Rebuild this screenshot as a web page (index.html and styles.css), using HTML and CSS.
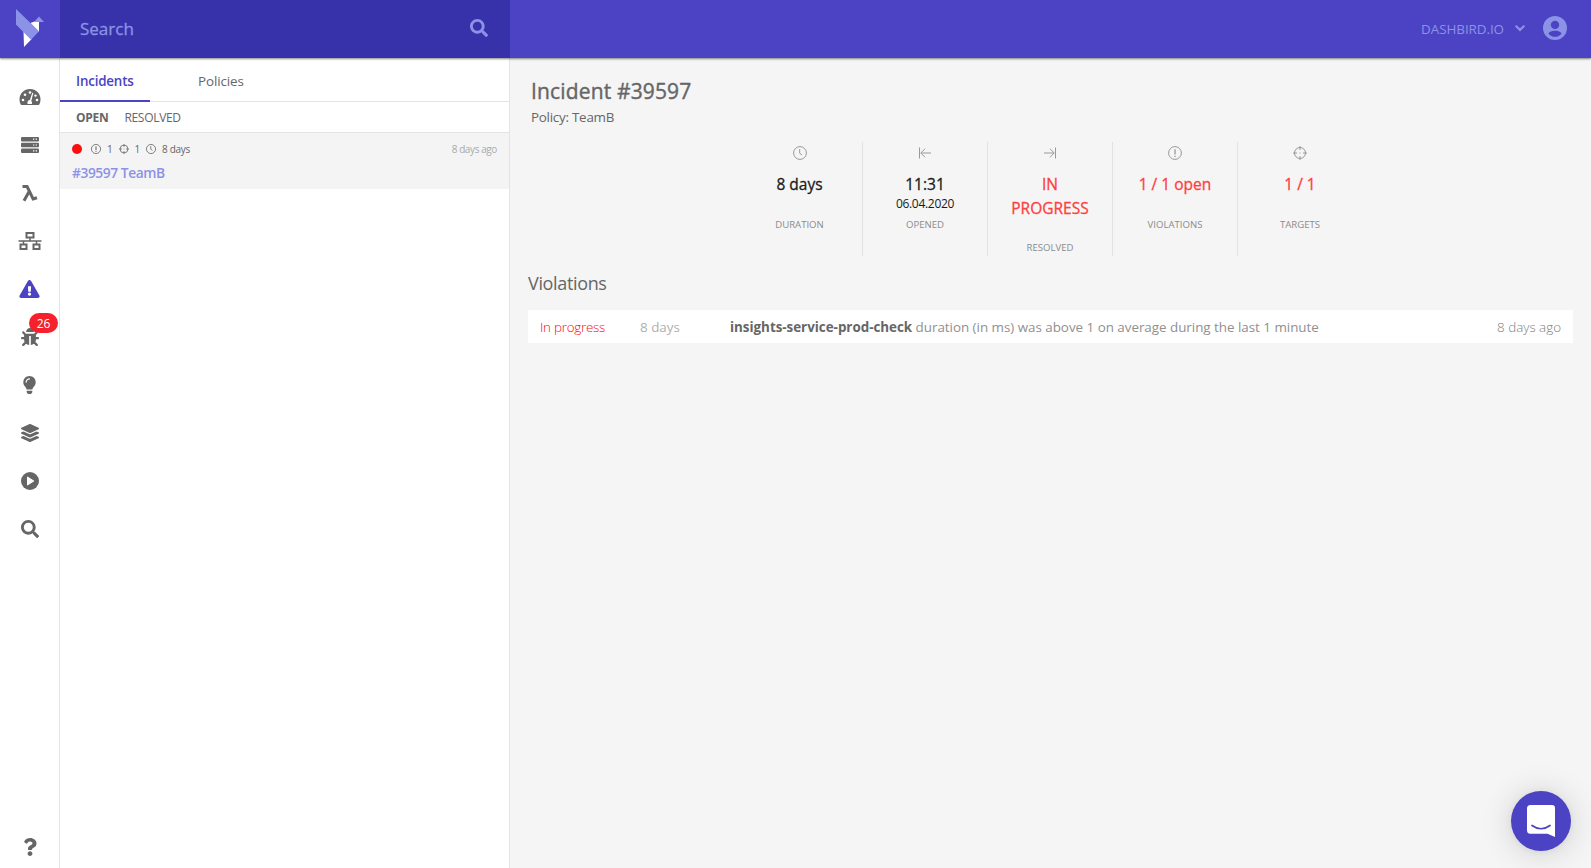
FILE: index.html
```
<!DOCTYPE html>
<html lang="en">
<head>
<meta charset="utf-8">
<title>Incident #39597</title>
<link rel="stylesheet" href="styles.css">
</head>
<body>
<svg class="defs" aria-hidden="true">
  <symbol id="search" viewBox="0 0 512 512"><path d="M505 442.7L405.3 343c-4.500-4.500-10.600-7-17-7H372c27.600-35.300 44-79.700 44-128C416 93.100 322.900 0 208 0S0 93.100 0 208s93.100 208 208 208c48.300 0 92.700-16.400 128-44v16.300c0 6.400 2.500 12.500 7 17l99.700 99.700c9.400 9.400 24.600 9.400 33.900 0l28.300-28.300c9.400-9.400 9.400-24.600.1-34zM208 336c-70.700 0-128-57.200-128-128 0-70.700 57.200-128 128-128 70.700 0 128 57.200 128 128 0 70.700-57.200 128-128 128z"/></symbol>
  <symbol id="clock" viewBox="0 0 14 14"><g fill="none" stroke="currentColor"><circle cx="7" cy="7" r="6.4"/><path d="M6.700 3v4.300L9 9"/></g></symbol>
  <symbol id="alert" viewBox="0 0 14 14"><g fill="none" stroke="currentColor"><circle cx="7" cy="7" r="6.400"/><path d="M7 3.300v5.200M7 9.700v1.300" stroke-width="1.300"/></g></symbol>
  <symbol id="target" viewBox="0 0 14 14"><g fill="none" stroke="currentColor"><circle cx="7" cy="7" r="5.500"/><path d="M7 0v4M7 10v4M0 7h4M10 7h4M6.500 7h1"/></g></symbol>
</svg>
<header class="topbar">
  <a class="logo"><svg width="59" height="58" viewBox="0 0 59 58"><path fill="#fff" d="M30.500 23L34.500 21.500H39V32zM23.500 31L31.500 39.300 24 47z"/><path fill="#8c92e6" d="M16 9L39 31.200 31 39.700 16 24.500zM34 22L39 16.500 44 22z"/></svg></a>
  <div class="searchbox"><span class="search-text">Search</span><svg class="search-icon"><use href="#search"/></svg></div>
  <div class="account"><span class="org">DASHBIRD.IO</span>
    <svg class="chev" viewBox="0 0 10 7"><path d="M1.300 1.300L5 5l3.700-3.700" fill="none" stroke="currentColor" stroke-width="2.200" stroke-linecap="round"/></svg>
    <svg class="avatar" viewBox="0 0 24 24"><path fill="currentColor" fill-rule="evenodd" d="M12 0a12 12 0 1 0 0 24 12 12 0 0 0 0-24zm0 4.700a4.200 4.200 0 1 1 0 8.400 4.200 4.200 0 0 1 0-8.400zM5.500 17.700c.6-2.200 4.200-3 6.500-3s5.900.8 6.500 3c-1.400 2-4 3.100-6.500 3.100s-5.100-1.100-6.500-3.100z"/></svg>
  </div>
</header>
<div class="shell">
  <nav class="rail">
    <a class="nav"><svg width="22" height="18" viewBox="0 0 22 18"><path fill-rule="evenodd" d="M11 1C5 1 .5 5.600.5 11.500c0 1.900.4 3.500 1.200 5 .2.300.5.500.9.500h16.800c.4 0 .7-.2.9-.5.800-1.500 1.200-3.100 1.200-5C21.500 5.600 17 1 11 1z"/><g fill="#fff"><circle cx="4" cy="12" r="1.300"/><circle cx="6" cy="6.800" r="1.300"/><circle cx="11" cy="4.500" r="1.300"/><circle cx="16.500" cy="7.600" r="1.200"/><circle cx="18" cy="12" r="1.300"/><path d="M13.300 4.800l1 .3-2 7.900a2.500 2.500 0 0 1 .5 3H8.700a2.600 2.600 0 0 1 2.200-3.900z"/></g></svg></a>
    <a class="nav"><svg width="18" height="18" viewBox="0 0 18 18"><rect y="1" width="18" height="4.500" rx="1"/><rect y="6.800" width="18" height="4.500" rx="1"/><rect y="12.500" width="18" height="4.500" rx="1"/><path stroke="#fff" stroke-width="1.200" d="M12 3.200h1.300M14.700 3.200H16M12 9h1.300M14.700 9H16M12 14.800h1.300M14.700 14.800H16"/></svg></a>
    <a class="nav"><svg width="18" height="18" viewBox="0 0 18 18"><path fill="none" stroke="currentColor" stroke-width="3" d="M1.500 2.500h4.600l6 12.400 3.900-1.200M8.300 7.300L3 16.800"/></svg></a>
    <a class="nav"><svg width="24" height="20" viewBox="0 0 24 20"><g fill="none" stroke="currentColor" stroke-width="2"><rect x="8.500" y="2" width="7" height="4.500"/><rect x="2.500" y="13.500" width="6" height="4.500"/><rect x="15.500" y="13.500" width="6" height="4.500"/><path stroke-width="1.500" d="M.5 10h23M12 7v3M5.500 10v3M18.500 10v3"/></g></svg></a>
    <a class="nav active"><svg width="21" height="18" viewBox="0 0 576 512"><path d="M569.517 440.013C587.975 472.007 564.806 512 527.940 512H48.054c-36.937 0-59.999-40.055-41.577-71.987L246.423 23.985c18.467-32.009 64.720-31.951 83.154 0l239.940 416.028zM288 354c-25.405 0-46 20.595-46 46s20.595 46 46 46 46-20.595 46-46-20.595-46-46-46zm-43.673-165.346l7.418 136c.347 6.364 5.609 11.346 11.982 11.346h48.546c6.373 0 11.635-4.982 11.982-11.346l7.418-136c.375-6.874-5.098-12.654-11.982-12.654h-63.383c-6.884 0-12.356 5.780-11.981 12.654z"/></svg></a>
    <a class="nav"><svg width="18" height="18" viewBox="0 0 512 512"><path d="M511.988 288.900c-.478 17.430-15.217 31.100-32.653 31.100H424v16c0 21.864-4.882 42.584-13.600 61.145l60.228 60.228c12.496 12.497 12.496 32.758 0 45.255-12.498 12.497-32.759 12.496-45.256 0l-54.736-54.736C345.886 467.965 314.351 480 280 480V236c0-6.627-5.373-12-12-12h-24c-6.627 0-12 5.373-12 12v244c-34.351 0-65.886-12.035-90.636-32.108l-54.736 54.736c-12.498 12.497-32.759 12.496-45.256 0-12.496-12.497-12.496-32.758 0-45.255l60.228-60.228C92.882 378.584 88 357.864 88 336v-16H32.666C15.230 320 .491 306.330.013 288.900-.484 270.816 14.028 256 32 256h56v-58.745l-46.628-46.628c-12.496-12.497-12.496-32.758 0-45.255 12.498-12.497 32.758-12.497 45.256 0L141.255 160h229.489l54.627-54.627c12.498-12.497 32.758-12.497 45.256 0 12.496 12.497 12.496 32.758 0 45.255L424 197.255V256h56c17.972 0 32.484 14.816 31.988 32.900zM257 0c-61.856 0-112 50.144-112 112h224C369 50.144 318.856 0 257 0z"/></svg><span class="badge">26</span></a>
    <a class="nav"><svg width="13" height="18" viewBox="0 0 352 512"><path d="M96.060 454.350c.01 6.290 1.870 12.450 5.360 17.690l17.090 25.690a31.990 31.990 0 0 0 26.640 14.280h61.710a31.990 31.990 0 0 0 26.640-14.280l17.090-25.690a31.989 31.989 0 0 0 5.360-17.690l.04-38.350H96.010l.05 38.350zM0 176c0 44.370 16.450 84.850 43.560 115.780 16.520 18.850 42.360 58.230 52.210 91.450.04.26.07.52.11.78h160.240c.04-.26.07-.51.11-.78 9.850-33.220 35.690-72.600 52.210-91.450C335.550 260.850 352 220.370 352 176 352 78.610 272.910-.3 175.450 0 73.440.31 0 82.970 0 176zm176-80c-44.110 0-80 35.890-80 80 0 8.840-7.160 16-16 16s-16-7.160-16-16c0-61.760 50.240-112 112-112 8.840 0 16 7.160 16 16s-7.160 16-16 16z"/></svg></a>
    <a class="nav"><svg width="18" height="18" viewBox="0 0 512 512"><path d="M12.410 148.020l232.940 105.670c6.800 3.090 14.490 3.090 21.290 0l232.940-105.670c16.550-7.510 16.550-32.520 0-40.030L266.650 2.310a25.607 25.607 0 0 0-21.290 0L12.410 107.980c-16.550 7.510-16.550 32.530 0 40.040zm487.180 88.280l-58.090-26.330-161.640 73.270c-7.560 3.430-15.590 5.170-23.860 5.170s-16.290-1.740-23.860-5.170L70.510 209.970l-58.100 26.330c-16.550 7.500-16.550 32.500 0 40l232.940 105.590c6.800 3.080 14.490 3.080 21.290 0L499.590 276.300c16.550-7.500 16.550-32.500 0-40zm0 127.800l-57.870-26.230-161.860 73.370c-7.560 3.430-15.590 5.170-23.860 5.170s-16.290-1.740-23.860-5.170L70.290 337.870 12.410 364.100c-16.550 7.500-16.550 32.500 0 40l232.940 105.590c6.800 3.080 14.490 3.080 21.290 0L499.590 404.100c16.550-7.500 16.550-32.500 0-40z"/></svg></a>
    <a class="nav"><svg width="18" height="18" viewBox="0 0 18 18"><circle cx="9" cy="9" r="9"/><path fill="#fff" stroke="#fff" stroke-linejoin="round" d="M6.500 5l6.300 4-6.300 4z"/></svg></a>
    <a class="nav"><svg width="18" height="18"><use href="#search"/></svg></a>
    <a class="nav help"><svg width="14" height="18" viewBox="0 0 384 512"><path d="M202.021 0C122.202 0 70.503 32.703 29.914 91.026c-7.363 10.580-5.093 25.086 5.178 32.874l43.138 32.709c10.373 7.865 25.132 6.026 33.253-4.148 25.049-31.381 43.630-49.449 82.757-49.449 30.764 0 68.816 19.799 68.816 49.631 0 22.552-18.617 34.134-48.993 51.164-35.423 19.860-82.299 44.576-82.299 106.405V320c0 13.255 10.745 24 24 24h72.471c13.255 0 24-10.745 24-24v-5.773c0-42.860 125.268-44.645 125.268-160.627C377.504 66.256 286.902 0 202.021 0zM192 373.459c-38.196 0-69.271 31.075-69.271 69.271 0 38.195 31.075 69.270 69.271 69.270s69.271-31.075 69.271-69.271-31.075-69.270-69.271-69.270z"/></svg></a>
  </nav>
  <aside class="list">
    <div class="tabs"><a class="tab on">Incidents</a><a class="tab policies">Policies</a></div>
    <div class="filters"><b class="open">OPEN</b><span class="res">RESOLVED</span></div>
    <article class="item">
      <div class="meta"><i class="dot"></i><svg class="mi m1"><use href="#alert"/></svg><span class="one">1</span><svg class="mi m2"><use href="#target"/></svg><span class="one">1</span><svg class="mi m3"><use href="#clock"/></svg><span class="dur">8 days</span><span class="ago">8 days ago</span></div>
      <div class="name">#39597 TeamB</div>
    </article>
  </aside>
  <main class="detail">
    <h1>Incident #39597</h1>
    <p class="policy">Policy: TeamB</p>
    <section class="stats">
      <div class="stat"><svg class="si"><use href="#clock"/></svg><div class="val">8 days</div><div class="sub"></div><div class="lab">DURATION</div></div>
      <div class="stat"><svg class="si" viewBox="0 0 14 14"><path fill="none" stroke="currentColor" d="M1.500 1.500v11M13 7H3M7 2.700L2.800 7 7 11.300"/></svg><div class="val time">11:31</div><div class="sub">06.04.2020</div><div class="lab">OPENED</div></div>
      <div class="stat"><svg class="si" viewBox="0 0 14 14"><path fill="none" stroke="currentColor" d="M12.500 1.500v11M1 7h10M7 2.700L11.200 7 7 11.300"/></svg><div class="val red caps">IN PROGRESS</div><div class="sub"></div><div class="lab">RESOLVED</div></div>
      <div class="stat"><svg class="si"><use href="#alert"/></svg><div class="val red">1 / 1 open</div><div class="sub"></div><div class="lab">VIOLATIONS</div></div>
      <div class="stat"><svg class="si"><use href="#target"/></svg><div class="val red">1 / 1</div><div class="sub"></div><div class="lab">TARGETS</div></div>
    </section>
    <h2>Violations</h2>
    <div class="row"><span class="prog">In progress</span><span class="days">8 days</span><span class="msg"><b>insights-service-prod-check</b> <span>duration (in ms) was above 1 on average during the last 1 minute</span></span><span class="when">8 days ago</span></div>
  </main>
</div>
<button class="chat" aria-label="Chat"><svg width="60" height="60" viewBox="0 0 60 60"><path fill="#fff" d="M19.500 14h21.500q3 0 3 3v29l-7.500-3.300h-17q-3.500 0-3.500-3.500V17.500q0-3.500 3.500-3.500z"/><path fill="none" stroke="#4b43c4" stroke-width="1.700" stroke-linecap="round" d="M21 34.500q9 6.500 18 0"/></svg></button>
</body>
</html>
```
FILE: styles.css
```
* { box-sizing: border-box; }
body { margin: 0; height: 868px; overflow: hidden; display: flex; flex-direction: column; background: #f5f5f5; color: #666; font-family: "Open Sans", "Noto Sans", sans-serif; font-size: 13.4px; line-height: 20px; }
.defs { position: absolute; width: 0; height: 0; }
svg { display: block; fill: currentColor; flex: none; }
h1, h2, p { margin: 0; }
span, b, .val, .sub, .lab, .tab { white-space: nowrap; }

.topbar { height: 58px; flex: none; display: flex; background: #4b43c4; color: #8c92e6; box-shadow: 0 1px 2px rgba(0, 20, 0, .5); position: relative; z-index: 2; }
.logo { width: 60px; }
.searchbox { width: 450px; background: #3732aa; display: flex; align-items: center; justify-content: space-between; padding: 0 22px 2px 20px; }
.search-text { font-size: 17px; padding-top: 2px; -webkit-text-stroke: .3px currentColor; }
.search-icon { width: 18px; height: 18px; }
.account { margin-left: auto; display: flex; align-items: center; padding: 0 24px 2px 0; }
.org { font-size: 13.400px; letter-spacing: -.050px; padding-top: 2px; }
.chev { width: 10px; height: 7px; margin: 0 18px 0 11px; }
.avatar { width: 24px; height: 24px; }

.shell { flex: 1; display: flex; min-height: 0; }
.rail { width: 60px; background: #fff; border-right: 1px solid #e4e4e4; padding-top: 15px; display: flex; flex-direction: column; }
.nav { height: 48px; flex: none; display: flex; align-items: center; justify-content: center; position: relative; }
.active { color: #4b43c4; }
.help { margin-top: auto; margin-bottom: -3px; }
.badge { position: absolute; left: 29px; top: 0; width: 29px; height: 20px; border-radius: 10px; background: #f5222d; color: #fff; font-size: 12px; line-height: 21px; text-align: center; }

.list { width: 450px; background: #fff; border-right: 1px solid #e4e4e4; }
.tabs { height: 44px; display: flex; border-bottom: 1px solid #e4e4e4; }
.tab { height: 44px; line-height: 47px; font-size: 13.400px; letter-spacing: -.1px; }
.on { width: 90px; padding-left: 16px; color: #4b43c4; font-weight: 600; border-bottom: 2px solid #4b43c4; letter-spacing: -.2px; }
.policies { margin-left: 48px; }
.filters { height: 31px; display: flex; gap: 16px; padding-left: 16px; line-height: 32px; border-bottom: 1px solid #e4e4e4; font-size: 12px; letter-spacing: -.3px; }
.open { font-weight: 700; }
.item { height: 56px; background: #f4f4f4; padding: 6px 12px 0; }
.meta { height: 20px; display: flex; align-items: center; font-size: 10px; letter-spacing: -.3px; }
.dot { width: 10px; height: 10px; border-radius: 5px; background: #fa0f0f; }
.mi { width: 10px; height: 10px; color: #555; }
.m1 { margin-left: 9px; }
.m2, .m3 { margin-left: 6px; }
.one { margin-left: 6px; width: 5.500px; }
.dur { margin-left: 6px; }
.ago { margin-left: auto; color: #aaa; letter-spacing: -.4px; }
.name { font-weight: 600; font-size: 13.800px; line-height: 20px; margin-top: 4px; color: #8c92e6; letter-spacing: -.45px; }

.detail { flex: 1; padding: 18px 18px 0; }
h1 { font-size: 21px; line-height: 30px; font-weight: 400; padding-left: 3px; letter-spacing: .15px; -webkit-text-stroke: .4px currentColor; }
.policy { padding-left: 3px; line-height: 20px; margin-top: 1px; letter-spacing: -.25px; }
.stats { display: flex; width: 625px; height: 114px; margin: 15px 0 0 209px; }
.stat { width: 125px; display: flex; flex-direction: column; align-items: center; text-align: center; padding-top: 4px; }
.stat + .stat { border-left: 1px solid #e2e2e2; }
.si { width: 14px; height: 14px; color: #999; }
.val { font-size: 15.500px; line-height: 24px; -webkit-text-stroke: .3px currentColor; color: #1a1a1a; margin-top: 12px; }
.caps { white-space: normal; width: 80px; }
.sub { height: 16px; line-height: 16px; font-size: 12px; letter-spacing: -.3px; color: #1a1a1a; }
.lab { font-size: 9.600px; line-height: 16px; margin-top: 5px; color: #8c8c8c; }
.val.red { color: #ff4040; }
h2 { font-size: 18px; font-weight: 400; line-height: 26px; margin-top: 14px; letter-spacing: -.35px; }
.row { height: 33px; margin-top: 14px; background: #fff; display: flex; padding: 0 12px; line-height: 34px; font-size: 13.400px; color: #999; }
.prog { width: 100px; color: #ff0505; font-weight: 300; letter-spacing: -.25px; }
.days { width: 90px; color: #b0b0b0; }
.msg { color: #909090; letter-spacing: -.02px; }
.msg b { color: #666; font-weight: 700; }
.when { margin-left: auto; font-weight: 300; color: #808080; }

.chat { position: absolute; right: 20px; bottom: 17px; width: 60px; height: 60px; padding: 0; border: 0; border-radius: 50%; background: #4b43c4; box-shadow: 0 1px 6px rgba(0, 0, 0, .06), 0 2px 32px rgba(0, 0, 0, .16); }
```
